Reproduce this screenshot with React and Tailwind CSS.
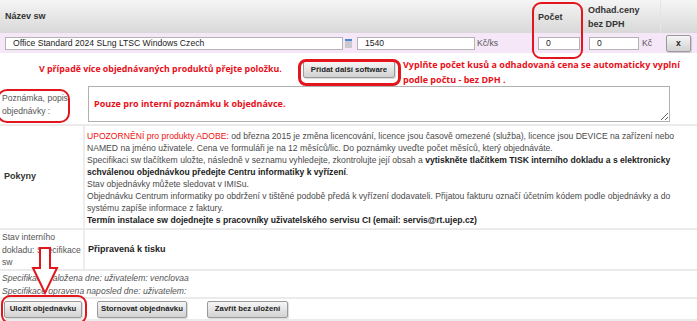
import React from 'react';

const RED = 'text-[#e8101a]';

function GrayButton({ children, className = '' }) {
  return (
    <button
      className={`h-[17px] border border-[#9a9a9a] rounded-[2px] bg-linear-to-b from-[#f6f6f6] to-[#d2d2d2] text-[7.8px] font-bold text-[#222] leading-none whitespace-nowrap shadow-[1px_1px_1px_rgba(0,0,0,0.15)] ${className}`}
    >
      {children}
    </button>
  );
}

export default function App() {
  return (
    <div className="relative w-[697px] h-[321px] overflow-hidden bg-white text-[#444] font-['Liberation_Sans',Arial,sans-serif] text-[8.6px]">
      {/* Header */}
      <div className="flex h-[33px] bg-linear-to-b from-[#f5f5f5] to-[#d8d8d8] font-bold text-[#333] text-[9px]">
        <div className="w-[531px] flex items-center pl-[5px] pt-[1px]">Název sw</div>
        <div className="w-[51px] flex items-center pl-[7px] pt-[2px]">Počet</div>
        <div className="w-[78px] flex flex-col justify-center pl-[6px] leading-[14px]">
          <span>Odhad.ceny</span>
          <span>bez DPH</span>
        </div>
        <div className="flex-1 border-l border-[#e4e4e4]"></div>
      </div>

      {/* Item row */}
      <div className="flex items-center h-[20px] bg-[#f6e7f8]">
        <div className="w-[531px] flex items-center">
          <input
            readOnly
            defaultValue="Office Standard 2024 SLng LTSC Windows Czech"
            className="ml-[5px] w-[338px] h-[13px] border border-[#b4b4b4] bg-white px-[7px] text-[8.6px] text-[#222] outline-none"
          />
          <div className="self-start mt-[2px] ml-[2px] w-[7px] h-[9px] bg-[#c9c9cf] border-t-2 border-[#4d86d6]"></div>
          <input
            readOnly
            defaultValue="1540"
            className="ml-[5px] w-[118px] h-[13px] border border-[#b4b4b4] bg-white px-[7px] text-[8.6px] text-[#222] outline-none"
          />
          <span className="ml-[2px] text-[#555]">Kč/ks</span>
        </div>
        <div className="w-[51px] flex items-center">
          <input
            readOnly
            defaultValue="0"
            className="ml-[7px] w-[42px] h-[13px] border border-[#b4b4b4] bg-white px-[7px] text-[8.6px] text-[#222] outline-none"
          />
        </div>
        <div className="w-[78px] flex items-center">
          <input
            readOnly
            defaultValue="0"
            className="ml-[7px] w-[50px] h-[13px] border border-[#b4b4b4] bg-white px-[7px] text-[8.6px] text-[#222] outline-none"
          />
          <span className="ml-[3px] text-[#555]">Kč</span>
        </div>
        <div className="flex-1 flex items-center">
          <GrayButton className="ml-[6px] w-[25px] h-[15px] text-[8.6px]">x</GrayButton>
        </div>
      </div>

      {/* Add software row */}
      <div className="flex items-center h-[33px] font-['Open_Sans',sans-serif] font-bold">
        <span className={`ml-[39px] w-[259px] whitespace-nowrap text-[8.8px] pt-[1px] ${RED}`}>
          V případě více objednávaných produktů přejte položku.
        </span>
        <GrayButton className="ml-[5px] w-[92px] font-['Liberation_Sans',Arial,sans-serif]">
          Přidat další software
        </GrayButton>
        <div className={`ml-[8px] whitespace-nowrap text-[9px] leading-[15px] pt-[5px] ${RED}`}>
          Vyplňte počet kusů a odhadovaná cena se automaticky vyplní
          <br />
          podle počtu - bez DPH .
        </div>
      </div>

      {/* Note row */}
      <div className="flex items-center h-[40px] border-b-2 border-[#ebebeb]">
        <div className="w-[85px] pl-[2px] leading-[13px] text-[#555]">
          Poznámka, popis
          <br />
          objednávky :
        </div>
        <textarea
          readOnly
          placeholder="Pouze pro interní poznámku k objednávce."
          className="ml-[3px] w-[582px] h-[36px] self-start border border-[#b0b0b0] bg-white pl-[5px] pt-[10px] font-['Open_Sans',sans-serif] text-[9px] font-bold placeholder:text-[#e8101a] placeholder:opacity-100 outline-none resize"
        />
      </div>

      {/* Instructions row */}
      <div className="flex h-[104px] border-b-2 border-[#ebebeb]">
        <div className="w-[85px] border-r-2 border-[#ededed] flex items-center pl-[4px] font-bold text-[#333] text-[9px]">
          Pokyny
        </div>
        <div className="pl-[2px] pt-[4px] leading-[12px] text-[#4a4a4a]">
          <p>
            <span className="text-[#f01010]">UPOZORNĚNÍ pro produkty ADOBE:</span> od března 2015 je změna licencování, licence jsou časově omezené (služba), licence jsou DEVICE na zařízení nebo
          </p>
          <p>NAMED na jméno uživatele. Cena ve formuláři je na 12 měsíců/lic. Do poznámky uveďte počet měsíců, který objednáváte.</p>
          <p>
            Specifikaci sw tlačítkem uložte, následně v seznamu vyhledejte, zkontrolujte její obsah a{' '}
            <b className="text-[#222]">vytiskněte tlačítkem TISK interního dokladu a s elektronicky</b>
          </p>
          <p>
            <b className="text-[#222]">schválenou objednávkou předejte Centru informatiky k vyřízení</b>.
          </p>
          <p>Stav objednávky můžete sledovat v IMISu.</p>
          <p>Objednávku Centrum informatiky po obdržení v tištěné podobě předá k vyřízení dodavateli. Přijatou fakturu označí účetním kódem podle objednávky a do</p>
          <p>systému zapíše informace z faktury.</p>
          <p>
            <b className="text-[#222]">Termín instalace sw dojednejte s pracovníky uživatelského servisu CI (email: servis@rt.ujep.cz)</b>
          </p>
        </div>
      </div>

      {/* Status row */}
      <div className="flex h-[41px] border-b-2 border-[#ebebeb]">
        <div className="w-[85px] border-r-2 border-[#ededed] pl-[2px] pt-[1px] leading-[12.5px] text-[#555]">
          Stav interního
          <br />
          dokladu: Specifikace
          <br />
          sw
        </div>
        <div className="flex items-center pl-[3px] font-bold text-[#222] text-[9px]">Připravená k tisku</div>
      </div>

      {/* Audit lines */}
      <div className="h-[28px] border-b-2 border-[#ebebeb] pl-[2px] pt-[1px] italic leading-[13px] text-[#555]">
        <p>Specifikace založena dne: uživatelem: venclovaa</p>
        <p>Specifikace opravena naposled dne: uživatelem:</p>
      </div>

      {/* Actions */}
      <div className="flex items-center h-[22px] border-b-2 border-[#ebebeb]">
        <GrayButton className="ml-[4px] w-[78px] h-[16px]">Uložit objednávku</GrayButton>
        <GrayButton className="ml-[15px] w-[90px] h-[16px]">Stornovat objednávku</GrayButton>
        <GrayButton className="ml-[20px] w-[81px] h-[16px]">Zavřít bez uložení</GrayButton>
      </div>

      {/* Red annotations */}
      <div className="absolute left-[532px] top-[2px] w-[51px] h-[57px] border-[2.5px] border-[#e3161d] rounded-[9px]"></div>
      <div className="absolute left-[298px] top-[59px] w-[103px] h-[27px] border-[3px] border-[#e3161d] rounded-[8px]"></div>
      <div className="absolute left-[-3px] top-[89px] w-[73px] h-[34px] border-[2.5px] border-[#e3161d] rounded-[10px]"></div>
      <div className="absolute left-[1px] top-[295px] w-[86px] h-[29px] border-[2.5px] border-[#e3161d] rounded-[9px]"></div>
      <svg className="absolute left-[30px] top-[244px]" width="32" height="54" viewBox="30 244 32 54">
        <polygon
          points="40,248 50,248 50,268 57,268 45,293 33,268 40,268"
          fill="white"
          stroke="#e3161d"
          strokeWidth="2"
          strokeLinejoin="miter"
        />
      </svg>
    </div>
  );
}
